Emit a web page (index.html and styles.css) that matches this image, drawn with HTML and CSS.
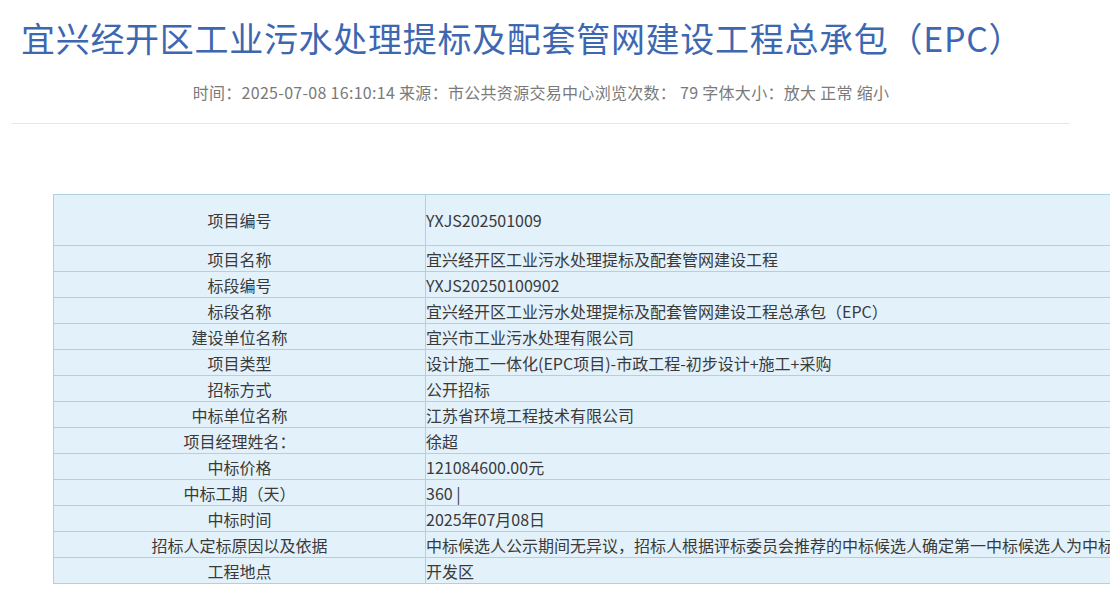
FILE: index.html
```html
<!DOCTYPE html>
<html lang="zh-CN">
<head>
<meta charset="utf-8">
<title>宜兴经开区工业污水处理提标及配套管网建设工程总承包（EPC）</title>
<link rel="stylesheet" href="styles.css">
</head>
<body>
<div class="page">
  <div class="article-head">
    <h1 class="title">宜兴经开区工业污水处理提标及配套管网建设工程总承包（EPC）</h1>
    <div class="meta">时间：2025-07-08 16:10:14 来源：市公共资源交易中心浏览次数： 79 字体大小：放大 正常 缩小</div>
    <div class="divider"></div>
  </div>
  <div class="table-wrap">
    <table class="info">
      <colgroup><col class="col-label"><col class="col-value"></colgroup>
      <tr class="first"><td class="label">项目编号</td><td class="value">YXJS202501009</td></tr>
      <tr><td class="label">项目名称</td><td class="value">宜兴经开区工业污水处理提标及配套管网建设工程</td></tr>
      <tr><td class="label">标段编号</td><td class="value">YXJS20250100902</td></tr>
      <tr><td class="label">标段名称</td><td class="value">宜兴经开区工业污水处理提标及配套管网建设工程总承包（EPC）</td></tr>
      <tr><td class="label">建设单位名称</td><td class="value">宜兴市工业污水处理有限公司</td></tr>
      <tr><td class="label">项目类型</td><td class="value">设计施工一体化(EPC项目)-市政工程-初步设计+施工+采购</td></tr>
      <tr><td class="label">招标方式</td><td class="value">公开招标</td></tr>
      <tr><td class="label">中标单位名称</td><td class="value">江苏省环境工程技术有限公司</td></tr>
      <tr><td class="label">项目经理姓名：</td><td class="value">徐超</td></tr>
      <tr><td class="label">中标价格</td><td class="value">121084600.00元</td></tr>
      <tr><td class="label">中标工期（天）</td><td class="value">360 |</td></tr>
      <tr><td class="label">中标时间</td><td class="value">2025年07月08日</td></tr>
      <tr><td class="label">招标人定标原因以及依据</td><td class="value">中标候选人公示期间无异议，招标人根据评标委员会推荐的中标候选人确定第一中标候选人为中标人。</td></tr>
      <tr><td class="label">工程地点</td><td class="value">开发区</td></tr>
    </table>
  </div>
</div>
</body>
</html>
```
FILE: styles.css
```css
html, body {
  margin: 0;
  padding: 0;
  background: #ffffff;
}

body {
  font-family: "Noto Sans CJK SC", "Noto Sans", sans-serif;
  color: #333333;
  overflow: hidden;
}

.page {
  padding-top: 16px;
}

.article-head {
  margin-left: 12px;
  width: 1058px;
}

.title {
  margin: 0;
  padding-left: 9px;
  font-family: "Noto Sans CJK SC", "Noto Sans", sans-serif;
  font-weight: 400;
  font-size: 34px;
  line-height: 44px;
  color: #3d67b1;
  white-space: nowrap;
  letter-spacing: 0.7px;
}

.meta {
  margin-top: 22px;
  text-align: center;
  font-size: 16px;
  line-height: 20px;
  color: #7a7a7a;
  white-space: nowrap;
  letter-spacing: 0.3px;
}

.divider {
  margin-top: 21px;
  width: 1058px;
  height: 1px;
  background: #e6e6e6;
}

.table-wrap {
  margin-top: 70px;
  margin-left: 53px;
  width: 1057px;
  overflow: hidden;
}

.info {
  border-collapse: collapse;
  table-layout: fixed;
  width: 1500px;
  background: #e3f1fa;
  font-size: 16px;
  color: #3a3a3a;
  white-space: nowrap;
}

.col-label {
  width: 372px;
}

.info td {
  border: 1px solid #aed2e4;
  height: 25px;
  padding: 0;
  line-height: 24px;
  overflow: hidden;
}

.info tr.first td {
  height: 50px;
}

.info .label {
  text-align: center;
}

.info .value {
  text-align: left;
}
```
